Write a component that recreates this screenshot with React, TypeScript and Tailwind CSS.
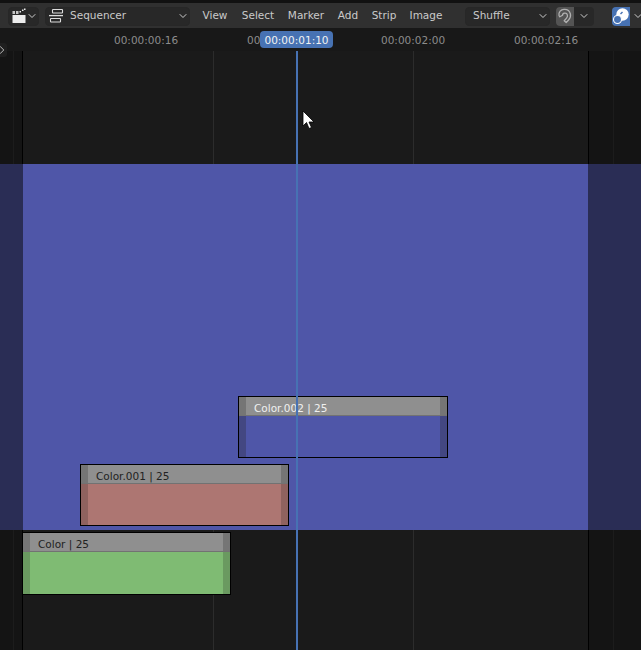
import React from 'react';
import { ChevronDown, ChevronRight } from 'lucide-react';

const font = "font-['DejaVu_Sans',sans-serif]";

const ClapperIcon = () => (
  <svg viewBox="0 0 14 16" width="14" height="16">
    <path fill="#ececec" d="M0.500 7h13v8h-13z" />
    <path fill="#c4c4c4" d="M0.500 3h2.500v3H0.500zM4 3h2.500v3H4z" />
    <path fill="#ececec" d="M7.500 3H9v1.500H7.500zM10 1.500h1.500V3H10zM12 0.500h1.500V2H12z" />
  </svg>
);

const SequencerIcon = () => (
  <svg viewBox="0 0 16 16" width="16" height="16" fill="none" stroke="#dcdcdc" strokeWidth="1.100">
    <rect x="4.500" y="1.500" width="10" height="3.500" rx="0.6" />
    <path d="M1 7.600h14" strokeWidth="1.300" />
    <rect x="2.500" y="10.500" width="10" height="3.500" rx="0.6" />
  </svg>
);

const MagnetIcon = () => (
  <svg viewBox="0 0 18 18" width="18" height="18" fill="none" stroke="#b0b0b0" strokeWidth="1.300" strokeLinejoin="round">
    <path d="M3 8.500c-.6-3.600 2-6 5-6.200 3-.2 5.700 1.700 6.400 4.700.5 2.400-.4 4.500-1.800 6l-2.400 2.500-2-1.800 2.300-2.600c.8-.9 1.200-2 .9-3.100-.3-1.300-1.600-2.100-2.900-1.900-1.200.2-2 1.200-1.900 2.200l-2.800 1.500z" />
  </svg>
);

const OverlayIcon = () => (
  <svg viewBox="0 0 18 18" width="18" height="18">
    <circle cx="10.500" cy="7.500" r="6.200" fill="#ffffff" />
    <circle cx="5.500" cy="12.500" r="4" fill="#4772b3" stroke="#ffffff" strokeWidth="1.100" />
    <path d="M8 6.500l2-2 1 1-2 2z" fill="#4772b3" />
  </svg>
);

const Chevron = () => <ChevronDown size={12} strokeWidth={2} className="shrink-0 text-[#cccccc]" />;

const menus = [
  { label: 'View', cls: 'w-[40px]' },
  { label: 'Select', cls: 'w-[46px]' },
  { label: 'Marker', cls: 'w-[50px]' },
  { label: 'Add', cls: 'w-[34px]' },
  { label: 'Strip', cls: 'w-[38px]' },
  { label: 'Image', cls: 'w-[46px]' },
];

function Header() {
  return (
    <div className="h-[28px] shrink-0 bg-[#111111] pt-[3px]">
      <div className="flex h-[25px] items-center bg-[#303030] pl-[8px] pt-[1px] text-[10.5px] text-[#cacaca]">
        <div className="flex h-[19px] w-[31px] shrink-0 items-center justify-between rounded-[4px] border border-[#272727] bg-[#282828] pl-[3px]">
          <ClapperIcon />
          <Chevron />
        </div>
        <div className="ml-[6px] flex h-[19px] w-[145px] shrink-0 items-center rounded-[4px] border border-[#272727] bg-[#282828] pl-[2px]">
          <SequencerIcon />
          <span className="ml-[6px] flex-1">Sequencer</span>
          <Chevron />
        </div>
        <div className="ml-[5px] flex shrink-0">
          {menus.map((m) => (
            <span key={m.label} className={`${m.cls} text-center`}>
              {m.label}
            </span>
          ))}
        </div>
        <div className="ml-[16px] flex h-[19px] w-[85px] shrink-0 items-center justify-between rounded-[4px] border border-[#272727] bg-[#282828] pl-[7px]">
          <span>Shuffle</span>
          <Chevron />
        </div>
        <div className="ml-[6px] flex h-[19px] w-[38px] shrink-0 items-center overflow-hidden rounded-[4px] bg-[#282828]">
          <div className="flex h-full w-[18px] items-center justify-center bg-[#545454]">
            <MagnetIcon />
          </div>
          <div className="flex flex-1 justify-center">
            <Chevron />
          </div>
        </div>
        <div className="ml-[18px] flex h-[19px] w-[18px] shrink-0 items-center justify-center rounded-l-[4px] bg-[#4772b3]">
          <OverlayIcon />
        </div>
        <div className="ml-[2px] shrink-0">
          <Chevron />
        </div>
      </div>
    </div>
  );
}

const rulerMarks = [
  { label: '00:00:00:16', cls: 'left-[114px]' },
  { label: '00:00:01:00', cls: 'left-[247px]' },
  { label: '00:00:02:00', cls: 'left-[381px]' },
  { label: '00:00:02:16', cls: 'left-[514px]' },
];

function Ruler() {
  return (
    <div className="relative z-10 h-[23px] shrink-0 bg-[#181818] text-[10.5px] text-[#8c8c8c]">
      {rulerMarks.map((m) => (
        <span key={m.label} className={`absolute top-[4px] leading-[16px] ${m.cls}`}>
          {m.label}
        </span>
      ))}
      <div className="absolute left-[260px] top-[3px] flex h-[17px] w-[73px] items-center justify-center rounded-[4px] bg-[#4772b3] pt-[2px] text-[#f2f2f2]">
        00:00:01:10
      </div>
      <div className="absolute left-0 top-[15px] flex h-[14px] w-[7px] items-center overflow-hidden rounded-r-[3px] bg-[#1f1f1f]">
        <ChevronRight size={14} strokeWidth={1.500} className="ml-[-5px] shrink-0 text-[#d0d0d0]" />
      </div>
    </div>
  );
}

type StripProps = {
  label: string;
  pos: string;
  body: string;
  handleBody: string;
  text: string;
};

// strips sit on the timeline at their frame, so they are placed absolutely
function Strip({ label, pos, body, handleBody, text }: StripProps) {
  return (
    <div className={`absolute flex flex-col border border-black ${pos} ${body}`}>
      <div className="flex h-[19px] border-b border-black/20 bg-[#8f8f8f]">
        <div className="w-[7px] bg-[#757575]" />
        <span className={`ml-[8px] flex-1 pt-[2px] text-[10.5px] leading-[18px] ${text}`}>{label}</span>
        <div className="w-[7px] bg-[#757575]" />
      </div>
      <div className="flex flex-1 justify-between">
        <div className={`w-[7px] ${handleBody}`} />
        <div className={`w-[7px] ${handleBody}`} />
      </div>
    </div>
  );
}

const Cursor = () => (
  <svg viewBox="0 0 13 20" width="13" height="20" className="absolute left-[302px] top-[59px]">
    <path d="M1 1v15l3.500-3.500 2.500 6 2.500-1-2.500-5.500h5z" fill="#ffffff" stroke="#000000" strokeWidth="0.8" />
  </svg>
);

function Timeline() {
  return (
    <div className="relative flex flex-1 flex-col overflow-hidden bg-[#141414]">
      <div className="h-[113px] shrink-0" />
      <div className="h-[366px] shrink-0 bg-[#2a2d55]" />
      <div className="flex-1" />

      <div className="absolute bottom-0 left-[23px] top-0 flex w-[565px] flex-col bg-[#1a1a1a]">
        <div className="h-[113px] shrink-0" />
        <div className="h-[366px] shrink-0 bg-[#4f56a8]" />
      </div>

      <div className="absolute left-[13px] top-0 h-[113px] w-px bg-[#1c1c1c]" />
      <div className="absolute bottom-0 left-[13px] top-[479px] w-px bg-[#1c1c1c]" />
      <div className="absolute left-[613px] top-0 h-[113px] w-px bg-[#1c1c1c]" />
      <div className="absolute bottom-0 left-[613px] top-[479px] w-px bg-[#1c1c1c]" />
      <div className="absolute left-[213px] top-0 h-[113px] w-px bg-[#2c2c2c]" />
      <div className="absolute bottom-0 left-[213px] top-[479px] w-px bg-[#2c2c2c]" />
      <div className="absolute left-[413px] top-0 h-[113px] w-px bg-[#2c2c2c]" />
      <div className="absolute bottom-0 left-[413px] top-[479px] w-px bg-[#2c2c2c]" />
      <div className="absolute left-[22px] top-0 h-[113px] w-px bg-black" />
      <div className="absolute bottom-0 left-[22px] top-[479px] w-px bg-black" />
      <div className="absolute left-[588px] top-0 h-[113px] w-px bg-black" />
      <div className="absolute bottom-0 left-[588px] top-[479px] w-px bg-black" />

      <Strip
        label="Color.002 | 25"
        pos="left-[238px] top-[345px] h-[62px] w-[210px]"
        body="bg-[#4f56a8]"
        handleBody="bg-[#434782]"
        text="text-[#efefef]"
      />
      <Strip
        label="Color.001 | 25"
        pos="left-[80px] top-[413px] h-[62px] w-[209px]"
        body="bg-[#ad7672]"
        handleBody="bg-[#8f625f]"
        text="text-[#222222]"
      />
      <Strip
        label="Color | 25"
        pos="left-[22px] top-[481px] h-[63px] w-[209px]"
        body="bg-[#7fbb73]"
        handleBody="bg-[#6a9a60]"
        text="text-[#222222]"
      />

      <div className="absolute bottom-0 left-[296px] top-0 w-[2px] bg-[#4772b3]" />
      <Cursor />
    </div>
  );
}

export default function App() {
  return (
    <div className={`flex h-[650px] w-[641px] flex-col overflow-hidden ${font}`}>
      <Header />
      <Ruler />
      <Timeline />
    </div>
  );
}
